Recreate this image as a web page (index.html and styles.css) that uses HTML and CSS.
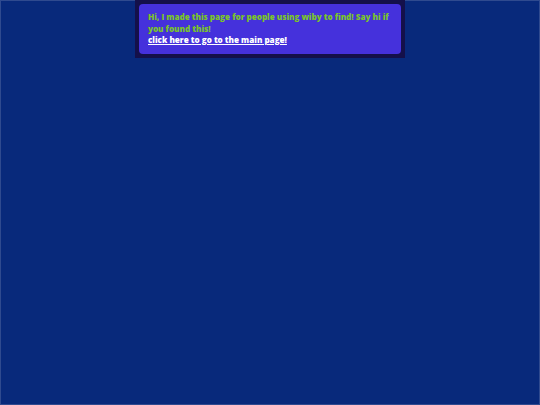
FILE: index.html
```html
<!DOCTYPE html>
<html>
<head>
<meta charset="utf-8">
<link rel="stylesheet" href="styles.css">
</head>
<body>
<div class="page">
  <div class="notice">
    <div class="notice-inner">
      <p class="msg">Hi, I made this page for people using wiby to find! Say hi if you found this!</p>
      <a class="link" href="#">click here to go to the main page!</a>
    </div>
  </div>
</div>
</body>
</html>
```
FILE: styles.css
```css
html, body {
  margin: 0;
  padding: 0;
  height: 100%;
}
body {
  background: #08297b;
  font-family: "Open Sans", "DejaVu Sans", sans-serif;
}
.page {
  min-height: 100%;
  box-sizing: border-box;
  box-shadow: inset 0 0 0 1px #2f4a8f;
  display: flex;
  flex-direction: column;
  align-items: center;
}
.notice {
  width: 270px;
  box-sizing: border-box;
  padding: 4px;
  background: #14104a;
}
.notice-inner {
  background: #4531dc;
  border-radius: 4px;
  height: 50px;
  box-sizing: border-box;
  padding: 7px 8px 0 9px;
}
.msg {
  margin: 0;
  color: #7ac42a;
  font-weight: 800;
  font-size: 8.1px;
  line-height: 11.5px;
}
.link {
  display: block;
  color: #ffffff;
  font-weight: 800;
  font-size: 8.1px;
  line-height: 11.5px;
  text-decoration: underline;
}
```
